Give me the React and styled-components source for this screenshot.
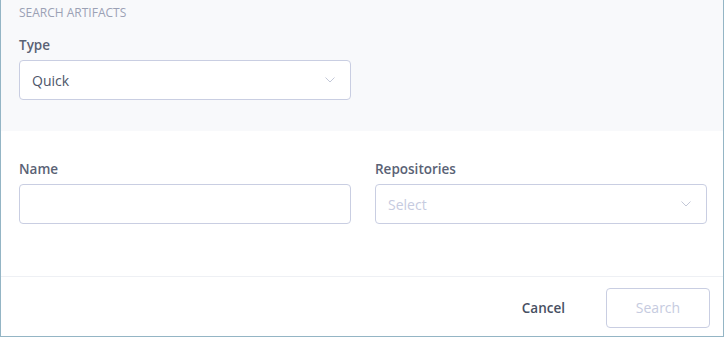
import React from "react";
import styled, { createGlobalStyle } from "styled-components";

const Global = createGlobalStyle`
  body {
    margin: 0;
    background: #ffffff;
    font-family: "Open Sans", "Liberation Sans", sans-serif;
  }
`;

function Chevron() {
  return (
    <svg width="12" height="8" viewBox="0 0 12 8">
      <path d="M1.5 1.5 L6 6 L10.5 1.5" fill="none" stroke="#c3c8d8" strokeWidth="1" />
    </svg>
  );
}

export default function App() {
  return (
    <Frame>
      <Global />
      <TopSection>
        <Title>SEARCH ARTIFACTS</Title>
        <Field>
          <Label>Type</Label>
          <Select>
            <Value>Quick</Value>
            <Chevron />
          </Select>
        </Field>
      </TopSection>
      <Body>
        <Field>
          <Label>Name</Label>
          <Input />
        </Field>
        <Field>
          <Label>Repositories</Label>
          <Select>
            <Value placeholder>Select</Value>
            <Chevron />
          </Select>
        </Field>
      </Body>
      <Footer>
        <CancelButton>Cancel</CancelButton>
        <SearchButton disabled>Search</SearchButton>
      </Footer>
    </Frame>
  );
}

const Frame = styled.div`
  width: 722px;
  height: 336px;
  border: 1px solid #94b5c5;
  border-top: none;
  background: #ffffff;
  display: flex;
  flex-direction: column;
`;

const TopSection = styled.section`
  background: #f8f9fb;
  height: 131px;
  box-sizing: border-box;
  padding: 5px 0 0 18px;
  flex-shrink: 0;
`;

const Title = styled.div`
  font-size: 12px;
  line-height: 16px;
  color: #9ba1b5;
  margin-bottom: 14px;
`;

const Field = styled.div`
  display: flex;
  flex-direction: column;
  width: 332px;
`;

const Label = styled.label`
  font-size: 13.5px;
  font-weight: 600;
  color: #5a6275;
  line-height: 20px;
  margin-bottom: 5px;
`;

const Select = styled.div`
  height: 40px;
  box-sizing: border-box;
  border: 1px solid #c9cee2;
  border-radius: 4px;
  background: #ffffff;
  display: flex;
  align-items: center;
  justify-content: space-between;
  padding: 0 14px 0 12px;
`;

const Value = styled.span`
  font-size: 14px;
  color: ${(p) => (p.placeholder ? "#c6cbe0" : "#4e566a")};
`;

const Input = styled.input`
  height: 40px;
  box-sizing: border-box;
  border: 1px solid #c9cee2;
  border-radius: 4px;
  background: #ffffff;
  outline: none;
`;

const Body = styled.section`
  display: flex;
  gap: 24px;
  padding: 28px 15px 0 18px;
  height: 146px;
  box-sizing: border-box;
  border-bottom: 1px solid #eef0f4;
`;

const Footer = styled.footer`
  flex: 1;
  display: flex;
  align-items: center;
  justify-content: flex-end;
  padding: 2px 13px 0 0;
  gap: 41px;
`;

const CancelButton = styled.button`
  border: none;
  background: none;
  font-family: inherit;
  font-size: 13.5px;
  font-weight: 600;
  color: #474f62;
  padding: 0;
`;

const SearchButton = styled.button`
  width: 104px;
  height: 40px;
  border: 1px solid #c9cee2;
  border-radius: 4px;
  background: #ffffff;
  font-family: inherit;
  font-size: 14px;
  color: #c6cbe0;
`;
